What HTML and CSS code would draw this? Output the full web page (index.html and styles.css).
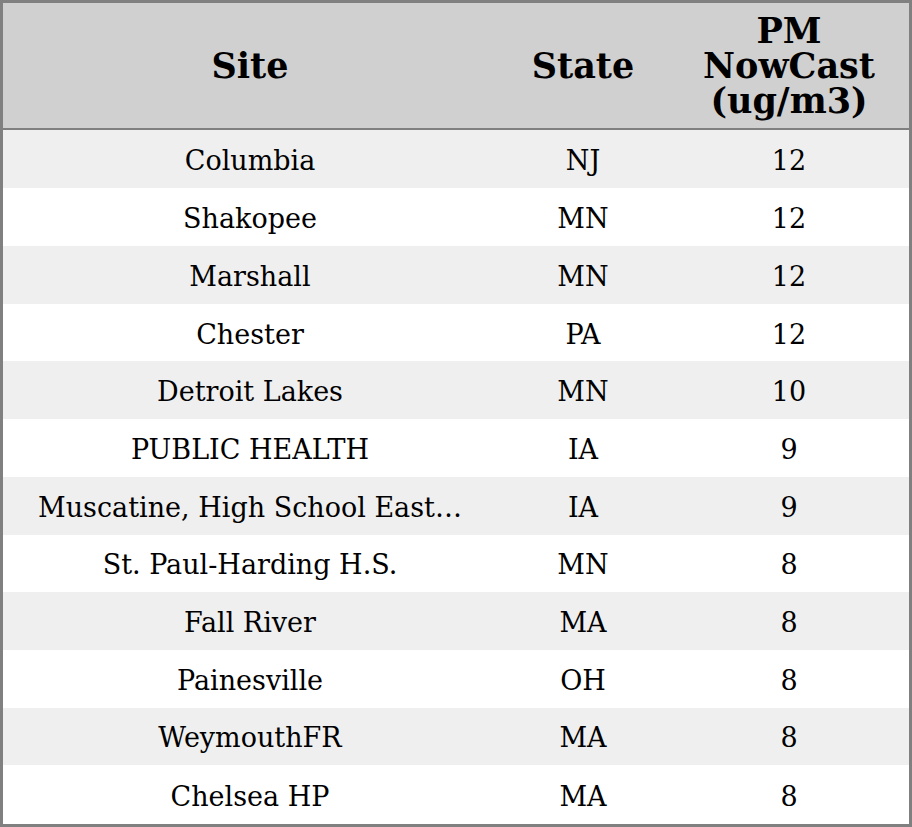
FILE: index.html
```html
<!DOCTYPE html>
<html>
<head>
<meta charset="utf-8">
<link rel="stylesheet" href="styles.css">
</head>
<body>
<table class="aq">
  <thead>
    <tr><th class="c-site">Site</th><th class="c-state">State</th><th class="c-pm">PM NowCast (ug/m3)</th></tr>
  </thead>
  <tbody>
    <tr><td>Columbia</td><td>NJ</td><td>12</td></tr>
    <tr><td>Shakopee</td><td>MN</td><td>12</td></tr>
    <tr><td>Marshall</td><td>MN</td><td>12</td></tr>
    <tr><td>Chester</td><td>PA</td><td>12</td></tr>
    <tr><td>Detroit Lakes</td><td>MN</td><td>10</td></tr>
    <tr><td>PUBLIC HEALTH</td><td>IA</td><td>9</td></tr>
    <tr><td>Muscatine, High School East…</td><td>IA</td><td>9</td></tr>
    <tr><td>St. Paul-Harding H.S.</td><td>MN</td><td>8</td></tr>
    <tr><td>Fall River</td><td>MA</td><td>8</td></tr>
    <tr><td>Painesville</td><td>OH</td><td>8</td></tr>
    <tr><td>WeymouthFR</td><td>MA</td><td>8</td></tr>
    <tr><td>Chelsea HP</td><td>MA</td><td>8</td></tr>
  </tbody>
</table>
</body>
</html>
```
FILE: styles.css
```css
html, body { margin: 0; padding: 0; background: #fff; }
.aq {
  width: 912px;
  height: 827px;
  border-collapse: collapse;
  border: 3px solid #808080;
  font-family: "DejaVu Serif", serif;
  table-layout: fixed;
  color: #000;
}
.aq th {
  background: #d0d0d0;
  font-size: 35px;
  font-weight: bold;
  line-height: 35px;
  height: 125px;
  padding: 0 4px;
  border-bottom: 2px solid #808080;
  text-align: center;
}
.c-site { width: 486px; }
.c-state { width: 164px; }
.c-pm { width: 232px; }
.aq td {
  font-size: 27px;
  padding: 3px 0 0;
  text-align: center;
}
.aq tbody tr:nth-child(odd) td { background: #efefef; }
```
